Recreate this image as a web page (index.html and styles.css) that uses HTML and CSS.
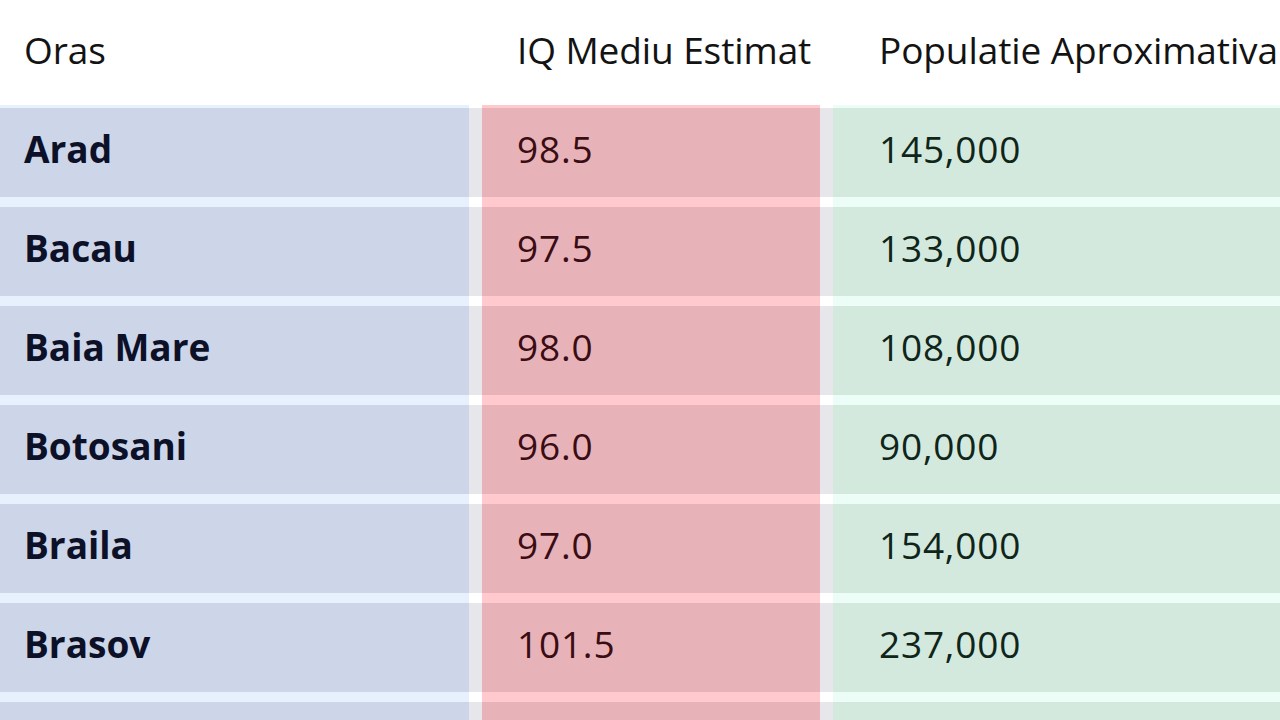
FILE: index.html
```html
<!DOCTYPE html>
<html lang="ro">
<head>
<meta charset="utf-8">
<title>Orase</title>
<link rel="stylesheet" href="styles.css">
</head>
<body>
<div class="table">
  <div class="row head">
    <div class="cell c1">Oras</div>
    <div class="sep"></div>
    <div class="cell c2">IQ Mediu Estimat</div>
    <div class="sep"></div>
    <div class="cell c3">Populatie Aproximativa</div>
  </div>
  <div class="row data first">
    <div class="cell c1">Arad</div><div class="sep"></div>
    <div class="cell c2 num">98.5</div><div class="sep"></div>
    <div class="cell c3 num">145,000</div>
  </div>
  <div class="row data">
    <div class="cell c1">Bacau</div><div class="sep"></div>
    <div class="cell c2 num">97.5</div><div class="sep"></div>
    <div class="cell c3 num">133,000</div>
  </div>
  <div class="row data">
    <div class="cell c1">Baia Mare</div><div class="sep"></div>
    <div class="cell c2 num">98.0</div><div class="sep"></div>
    <div class="cell c3 num">108,000</div>
  </div>
  <div class="row data">
    <div class="cell c1">Botosani</div><div class="sep"></div>
    <div class="cell c2 num">96.0</div><div class="sep"></div>
    <div class="cell c3 num">90,000</div>
  </div>
  <div class="row data">
    <div class="cell c1">Braila</div><div class="sep"></div>
    <div class="cell c2 num">97.0</div><div class="sep"></div>
    <div class="cell c3 num">154,000</div>
  </div>
  <div class="row data">
    <div class="cell c1">Brasov</div><div class="sep"></div>
    <div class="cell c2 num">101.5</div><div class="sep"></div>
    <div class="cell c3 num">237,000</div>
  </div>
  <div class="row data last">
    <div class="cell c1"></div><div class="sep"></div>
    <div class="cell c2"></div><div class="sep"></div>
    <div class="cell c3"></div>
  </div>
</div>
</body>
</html>
```

FILE: styles.css
```css
html, body {
  margin: 0;
  padding: 0;
  background: #ffffff;
  overflow: hidden;
}
body {
  width: 1280px;
  height: 720px;
  font-family: "Open Sans", "Liberation Sans", sans-serif;
}
.table {
  display: flex;
  flex-direction: column;
}
.row {
  display: grid;
  grid-template-columns: 469px 13px 338px 13px 1fr;
}
.head {
  height: 105px;
}
.head .cell {
  display: flex;
  align-items: center;
  padding-bottom: 6px;
  box-sizing: border-box;
  font-size: 37px;
  font-weight: 400;
  color: #131313;
  white-space: nowrap;
  letter-spacing: -0.1px;
}
.cell {
  display: flex;
  align-items: center;
  box-sizing: border-box;
  white-space: nowrap;
  overflow: hidden;
}
.c1 { padding-left: 24px; }
.c2 { padding-left: 35px; }
.c3 { padding-left: 46px; }

.data {
  height: 99px;
}
.data.first {
  height: 92px;
}
.data.last {
  height: 28px;
}
.data .cell, .data .sep {
  border-top: 10px solid transparent;
}
.data.first .cell, .data.first .sep {
  border-top-width: 3px;
}
.data .cell {
  font-size: 37px;
  padding-bottom: 8px;
}
.data .num {
  letter-spacing: 0.8px;
}
.data .sep {
  background: #e7e7eb;
  border-top-color: #ffffff;
}
.data .c1 {
  background: #cdd5e9;
  border-top-color: #e6f1fd;
  color: #0c1128;
  font-weight: 700;
}
.data .c2 {
  background: #e8b3b8;
  border-top-color: #ffc9cd;
  color: #3a0c13;
}
.data .c3 {
  background: #d4e9de;
  border-top-color: #ecfdf8;
  color: #0f2519;
}
```
